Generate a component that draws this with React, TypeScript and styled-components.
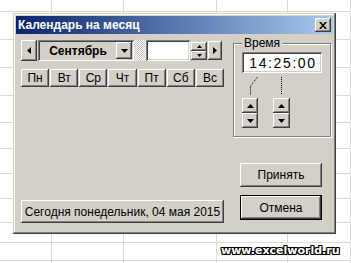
import React from "react";
import styled, { createGlobalStyle, css } from "styled-components";

const FACE = "#D4D0C8";

const GlobalStyle = createGlobalStyle`
  html, body { margin: 0; padding: 0; background: #fff; overflow: hidden; }
  body { font-family: "Liberation Sans", Arial, sans-serif; }
  * { box-sizing: border-box; }
`;

const raised = css`
  background: ${FACE};
  box-shadow: inset -1px -1px #404040, inset 1px 1px #fff, inset -2px -2px #808080, inset 2px 2px ${FACE};
`;

const sunken = css`
  box-shadow: inset 1px 1px #808080, inset -1px -1px #fff, inset 2px 2px #404040, inset -2px -2px ${FACE};
`;

const Stage = styled.div`
  position: relative;
  width: 351px;
  height: 263px;
  overflow: hidden;
`;

const Sheet = styled.div`
  display: grid;
  grid-template-columns: 52px 72px 93px 71px 63px;
  grid-template-rows: 12px 28px 28px 28px 27px 26px 25px 25px 24px 20px 18px 3px;
`;

const Cell = styled.div`
  border-right: 1px solid #d9d9d9;
  border-bottom: 1px solid #d9d9d9;
`;

const Window = styled.div`
  position: absolute;
  left: 13px;
  top: 13px;
  width: 323px;
  height: 221px;
  padding: 3px;
  background: ${FACE};
  box-shadow: inset -1px -1px #404040, inset 1px 1px ${FACE}, inset -2px -2px #808080, inset 2px 2px #fff;
  display: flex;
  flex-direction: column;
`;

const TitleBar = styled.div`
  height: 18px;
  flex: none;
  display: flex;
  align-items: center;
  padding: 0 2px;
  background: linear-gradient(to right, #0a246a, #a6caf0);
`;

const Title = styled.span`
  flex: 1;
  color: #fff;
  font-weight: bold;
  font-size: 12px;
  white-space: nowrap;
`;

const CloseButton = styled.div`
  ${raised};
  width: 16px;
  height: 14px;
  display: flex;
  align-items: center;
  justify-content: center;
`;

const Client = styled.div`
  flex: 1;
  display: grid;
  grid-template-columns: 203px 98px;
  column-gap: 9px;
  padding: 6px 2px 8px 5px;
`;

const LeftColumn = styled.div`
  display: flex;
  flex-direction: column;
`;

const TopRow = styled.div`
  display: flex;
  align-items: center;
  height: 21px;
`;

const Button = styled.div<{ $w?: number; $h?: number; $ml?: number }>`
  ${raised};
  width: ${(p) => (p.$w ? `${p.$w}px` : "auto")};
  height: ${(p) => (p.$h ? `${p.$h}px` : "auto")};
  margin-left: ${(p) => p.$ml ?? 0}px;
  flex: none;
  display: flex;
  align-items: center;
  justify-content: center;
  font-size: 12px;
  color: #000;
  white-space: nowrap;
`;

const Combo = styled.div`
  ${sunken};
  margin-left: 1px;
  width: 96px;
  height: 21px;
  padding: 2px;
  display: flex;
  align-items: stretch;
  background: ${FACE};
`;

const ComboText = styled.div`
  flex: 1;
  display: flex;
  align-items: center;
  justify-content: center;
  font-weight: bold;
  font-size: 12px;
`;

const Dither = styled.div`
  width: 12px;
  height: 21px;
  background: repeating-conic-gradient(#ffffff 0 25%, #c8c4bc 0 50%) 0 0 / 2px 2px;
`;

const TextBox = styled.div<{ $w: number; $h: number }>`
  ${sunken};
  background: #fff;
  width: ${(p) => p.$w}px;
  height: ${(p) => p.$h}px;
  flex: none;
`;

const SpinColumn = styled.div<{ $ml?: number }>`
  display: flex;
  flex-direction: column;
  margin-left: ${(p) => p.$ml ?? 0}px;
  flex: none;
`;

const DayRow = styled.div`
  margin-top: 8px;
  display: grid;
  grid-template-columns: repeat(7, 1fr);
  column-gap: 1px;
  height: 18px;
`;

const Spacer = styled.div`
  flex: 1;
`;

const RightColumn = styled.div`
  display: flex;
  flex-direction: column;
`;

const GroupBox = styled.div`
  position: relative;
  margin-top: 3px;
  height: 94px;
  border: 1px solid #808080;
  box-shadow: inset 1px 1px #fff, 1px 1px #fff;
  padding: 8px 0 0 8px;
  display: flex;
  flex-direction: column;
`;

const GroupLabel = styled.span`
  position: absolute;
  top: -8px;
  left: 8px;
  padding: 0 2px;
  background: ${FACE};
  font-size: 12px;
  line-height: 14px;
`;

const TimeField = styled.div`
  ${sunken};
  background: #fff;
  width: 80px;
  height: 21px;
  display: flex;
  align-items: center;
  justify-content: center;
  font-size: 14px;
  letter-spacing: 1.6px;
  padding-left: 2px;
`;

const Connectors = styled.svg`
  display: block;
  width: 80px;
  height: 25px;
`;

const SpinRow = styled.div`
  display: flex;
  gap: 15px;
`;

const DialogButton = styled(Button)<{ $default?: boolean; $mt: number }>`
  margin-left: 7px;
  margin-top: ${(p) => p.$mt}px;
  width: 82px;
  ${(p) =>
    p.$default &&
    css`
      border: 1px solid #000;
    `}
`;

const Watermark = styled.div`
  position: absolute;
  left: 221px;
  top: 244px;
  font-family: "DejaVu Sans", sans-serif;
  font-weight: bold;
  font-size: 11px;
  color: #fff;
  text-shadow: 1px 0 #000, -1px 0 #000, 0 1px #000, 0 -1px #000, 1px 1px #000, -1px -1px #000, 1px -1px #000, -1px 1px #000;
`;

const ArrowSvg = styled.svg`
  display: block;
`;

type Dir = "left" | "right" | "up" | "down";

const Arrow: React.FC<{ dir: Dir; size?: number }> = ({ dir, size = 4 }) => {
  const s = size;
  let pts = "";
  let w = s;
  let h = s * 2 - 1;
  if (dir === "left") pts = `${s},0 ${s},${2 * s - 1} 0,${s - 0.5}`;
  if (dir === "right") pts = `0,0 0,${2 * s - 1} ${s},${s - 0.5}`;
  if (dir === "up" || dir === "down") {
    w = s * 2 - 1;
    h = s;
    pts = dir === "up" ? `0,${s} ${2 * s - 1},${s} ${s - 0.5},0` : `0,0 ${2 * s - 1},0 ${s - 0.5},${s}`;
  }
  return (
    <ArrowSvg width={w} height={h} viewBox={`0 0 ${w} ${h}`}>
      <polygon points={pts} fill="#000" />
    </ArrowSvg>
  );
};

const days = ["Пн", "Вт", "Ср", "Чт", "Пт", "Сб", "Вс"];
const rowCount = 12;
const colCount = 5;

export default function App() {
  return (
    <>
      <GlobalStyle />
      <Stage>
        <Sheet>
          {Array.from({ length: rowCount * colCount }).map((_, i) => (
            <Cell key={i} />
          ))}
        </Sheet>

        <Window>
          <TitleBar>
            <Title>Календарь на месяц</Title>
            <CloseButton>
              <svg width="8" height="7" viewBox="0 0 8 7">
                <path d="M0 0h2l2 2.5L6 0h2L5 3.5 8 7H6L4 4.5 2 7H0l3-3.5z" fill="#000" />
              </svg>
            </CloseButton>
          </TitleBar>

          <Client>
            <LeftColumn>
              <TopRow>
                <Button $w={16} $h={21}>
                  <Arrow dir="left" />
                </Button>
                <Combo>
                  <ComboText>Сентябрь</ComboText>
                  <Button $w={16} $h={17}>
                    <Arrow dir="down" />
                  </Button>
                </Combo>
                <Dither />
                <TextBox $w={44} $h={21} />
                <SpinColumn $ml={1}>
                  <Button $w={16} $h={9}>
                    <Arrow dir="up" size={3} />
                  </Button>
                  <Button $w={16} $h={9}>
                    <Arrow dir="down" size={3} />
                  </Button>
                </SpinColumn>
                <Button $w={14} $h={19} $ml={1}>
                  <Arrow dir="right" />
                </Button>
              </TopRow>

              <DayRow>
                {days.map((d) => (
                  <Button key={d}>{d}</Button>
                ))}
              </DayRow>

              <Spacer />

              <Button $h={23}>Сегодня понедельник, 04 мая 2015</Button>
            </LeftColumn>

            <RightColumn>
              <GroupBox>
                <GroupLabel>Время</GroupLabel>
                <TimeField>14:25:00</TimeField>
                <Connectors viewBox="0 0 80 25">
                  <path d="M15.5 4 L8.5 13 L8.5 22" stroke="#000" strokeWidth="1" strokeDasharray="1 1" fill="none" />
                  <path d="M39.5 4 L39.5 22" stroke="#000" strokeWidth="1" strokeDasharray="1 1" fill="none" />
                </Connectors>
                <SpinRow>
                  <SpinColumn>
                    <Button $w={16} $h={15}>
                      <Arrow dir="up" />
                    </Button>
                    <Button $w={16} $h={15}>
                      <Arrow dir="down" />
                    </Button>
                  </SpinColumn>
                  <SpinColumn>
                    <Button $w={17} $h={15}>
                      <Arrow dir="up" />
                    </Button>
                    <Button $w={17} $h={15}>
                      <Arrow dir="down" />
                    </Button>
                  </SpinColumn>
                </SpinRow>
              </GroupBox>

              <DialogButton $h={24} $mt={26}>
                Принять
              </DialogButton>
              <DialogButton $h={25} $mt={8} $default>
                Отмена
              </DialogButton>
            </RightColumn>
          </Client>
        </Window>

        <Watermark>www.excelworld.ru</Watermark>
      </Stage>
    </>
  );
}
